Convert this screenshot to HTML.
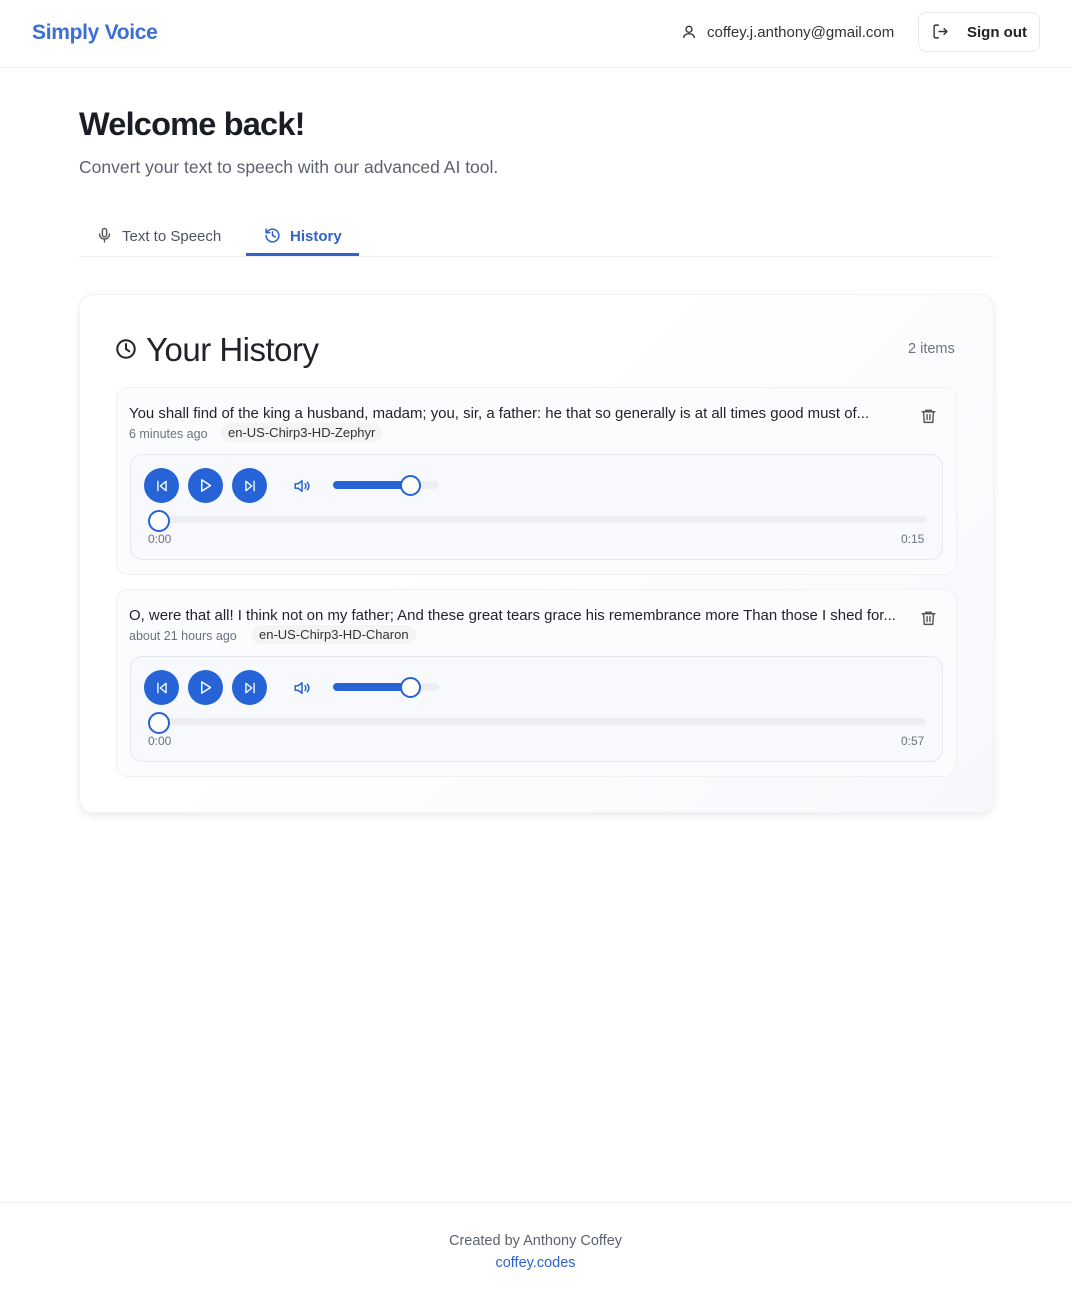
<!DOCTYPE html>
<html><head><meta charset="utf-8"><style>
*{box-sizing:border-box;margin:0;padding:0}
body{width:1071px;height:1290px;background:#fff;font-family:"Liberation Sans",sans-serif;color:#1f2937;position:relative;overflow:hidden}
.a{position:absolute;white-space:nowrap}
.btn{position:absolute;width:35px;height:35px;border-radius:50%;background:#2563d6;display:flex;align-items:center;justify-content:center}
.item{position:absolute;left:116px;width:841px;height:188px;border:1px solid #eef0f4;border-radius:12px;background:#fbfcfe}
.player{position:absolute;left:13px;top:66px;width:813px;height:106px;border:1px solid #e3e7ef;border-radius:12px;background:#f8f9fc}
.t{font-size:14.95px;color:#1f2229}
</style></head><body>
<div class="a" style="left:32px;top:21px;font-size:21px;font-weight:bold;color:#3b6fd4;letter-spacing:-0.3px">Simply Voice</div>
<svg class="a" style="left:681px;top:24px" width="16" height="16" viewBox="0 0 24 24" fill="none" stroke="#333" stroke-width="2"><circle cx="12" cy="8" r="4.5"/><path d="M4 21c0-4 3.5-6.5 8-6.5s8 2.5 8 6.5"/></svg>
<div class="a" style="left:707px;top:24px;font-size:15px;color:#333">coffey.j.anthony@gmail.com</div>
<div class="a" style="left:918px;top:12px;width:122px;height:40px;border:1px solid #e5e7eb;border-radius:8px"></div>
<svg class="a" style="left:932px;top:23px" width="17" height="17" viewBox="0 0 24 24" fill="none" stroke="#333" stroke-width="2" stroke-linecap="round" stroke-linejoin="round"><path d="M9 21H5a2 2 0 0 1-2-2V5a2 2 0 0 1 2-2h4"/><path d="M10 12h11M17 8l4 4-4 4"/></svg>
<div class="a" style="left:967px;top:24px;font-size:15px;font-weight:bold;color:#222">Sign out</div>
<div class="a" style="left:0;top:67px;width:1071px;height:1px;background:#f0f1f3"></div>

<div class="a" style="left:79px;top:106px;font-size:32.5px;font-weight:bold;color:#1a1d24;letter-spacing:-0.8px">Welcome back!</div>
<div class="a" style="left:79px;top:157px;font-size:17.5px;color:#5b6270">Convert your text to speech with our advanced AI tool.</div>

<svg class="a" style="left:96px;top:227px" width="17" height="17" viewBox="0 0 24 24" fill="none" stroke="#555" stroke-width="2" stroke-linecap="round"><rect x="9" y="2" width="6" height="12" rx="3"/><path d="M5 10a7 7 0 0 0 14 0M12 17v4"/></svg>
<div class="a" style="left:122px;top:228px;font-size:15px;color:#4b5260">Text to Speech</div>
<svg class="a" style="left:264px;top:227px" width="17" height="17" viewBox="0 0 24 24" fill="none" stroke="#3264c8" stroke-width="2.2" stroke-linecap="round" stroke-linejoin="round"><path d="M3 12a9 9 0 1 0 3-6.7L3 8"/><path d="M3 3v5h5"/><path d="M12 7v5l4 2"/></svg>
<div class="a" style="left:290px;top:228px;font-size:15px;font-weight:bold;color:#3264c8">History</div>
<div class="a" style="left:79px;top:256px;width:915px;height:1px;background:#eef0f3"></div>
<div class="a" style="left:246px;top:253px;width:113px;height:3px;background:#3264c8"></div>

<div class="a" style="left:79px;top:294px;width:915px;height:519px;border:1px solid #f0f2f5;border-radius:14px;background:linear-gradient(135deg,#fff 40%,#f6f8fc);box-shadow:0 3px 8px rgba(0,0,0,0.08)"></div>
<svg class="a" style="left:115px;top:338px" width="22" height="22" viewBox="0 0 24 24" fill="none" stroke="#1f2229" stroke-width="2.2" stroke-linecap="round"><circle cx="12" cy="12" r="9.5"/><path d="M12 6.5V12l3.5 2.5"/></svg>
<div class="a" style="left:146px;top:331px;font-size:33px;color:#1f2229;letter-spacing:-0.5px">Your History</div>
<div class="a" style="left:908px;top:341px;font-size:14.5px;color:#6b7280">2 items</div>

<div class="item" style="top:387px">
 <div class="a t" style="left:12px;top:17px">You shall find of the king a husband, madam; you, sir, a father: he that so generally is at all times good must of...</div>
 <div class="a" style="left:12px;top:39px;font-size:12.5px;color:#6b7280">6 minutes ago</div>
 <div class="a" style="left:104px;top:35px;padding:2px 7px;border-radius:10px;background:#f3f4f6;font-size:13px;color:#333">en-US-Chirp3-HD-Zephyr</div>
 <svg class="a" style="left:803px;top:19px" width="17" height="18" viewBox="0 0 24 24" fill="none" stroke="#555" stroke-width="2" stroke-linecap="round"><path d="M3 6h18M8 6V4h8v2M5 6l1 15h12l1-15M10 10v7M14 10v7"/></svg>
 <div class="player">
  <div class="btn" style="left:13px;top:13px"><svg width="14" height="14" viewBox="0 0 24 24" fill="none" stroke="#fff" stroke-width="2.3" stroke-linejoin="round" stroke-linecap="round"><path d="M5 4v16M19 4L9 12l10 8z"/></svg></div>
  <div class="btn" style="left:57px;top:13px"><svg width="15" height="15" viewBox="0 0 24 24" fill="none" stroke="#fff" stroke-width="2.3" stroke-linejoin="round"><path d="M6 3l14 9-14 9z"/></svg></div>
  <div class="btn" style="left:101px;top:13px"><svg width="14" height="14" viewBox="0 0 24 24" fill="none" stroke="#fff" stroke-width="2.3" stroke-linejoin="round" stroke-linecap="round"><path d="M19 4v16M5 4l10 8-10 8z"/></svg></div>
  <svg class="a" style="left:162px;top:22px" width="18" height="18" viewBox="0 0 24 24" fill="none" stroke="#2563d6" stroke-width="2" stroke-linejoin="round" stroke-linecap="round"><path d="M3 9h4l5-4v14l-5-4H3z"/><path d="M16 9a4 4 0 0 1 0 6M19 7a7 7 0 0 1 0 10"/></svg>
  <div class="a" style="left:202px;top:26px;width:106px;height:8px;border-radius:4px;background:#eceef2"></div>
  <div class="a" style="left:202px;top:26px;width:78px;height:8px;border-radius:4px;background:#2563d6"></div>
  <div class="a" style="left:269px;top:20px;width:21px;height:21px;border-radius:50%;background:#fff;border:2px solid #2563d6"></div>
  <div class="a" style="left:18px;top:61px;width:777px;height:7px;border-radius:4px;background:#eceef2"></div>
  <div class="a" style="left:17px;top:55px;width:22px;height:22px;border-radius:50%;background:#fff;border:2px solid #2563d6"></div>
  <div class="a" style="left:17px;top:77px;font-size:12px;color:#6b7280">0:00</div>
  <div class="a" style="left:770px;top:77px;font-size:12px;color:#6b7280">0:15</div>
 </div>
</div>

<div class="item" style="top:589px">
 <div class="a t" style="left:12px;top:17px">O, were that all! I think not on my father; And these great tears grace his remembrance more Than those I shed for...</div>
 <div class="a" style="left:12px;top:39px;font-size:12.5px;color:#6b7280">about 21 hours ago</div>
 <div class="a" style="left:135px;top:35px;padding:2px 7px;border-radius:10px;background:#f3f4f6;font-size:13px;color:#333">en-US-Chirp3-HD-Charon</div>
 <svg class="a" style="left:803px;top:19px" width="17" height="18" viewBox="0 0 24 24" fill="none" stroke="#555" stroke-width="2" stroke-linecap="round"><path d="M3 6h18M8 6V4h8v2M5 6l1 15h12l1-15M10 10v7M14 10v7"/></svg>
 <div class="player">
  <div class="btn" style="left:13px;top:13px"><svg width="14" height="14" viewBox="0 0 24 24" fill="none" stroke="#fff" stroke-width="2.3" stroke-linejoin="round" stroke-linecap="round"><path d="M5 4v16M19 4L9 12l10 8z"/></svg></div>
  <div class="btn" style="left:57px;top:13px"><svg width="15" height="15" viewBox="0 0 24 24" fill="none" stroke="#fff" stroke-width="2.3" stroke-linejoin="round"><path d="M6 3l14 9-14 9z"/></svg></div>
  <div class="btn" style="left:101px;top:13px"><svg width="14" height="14" viewBox="0 0 24 24" fill="none" stroke="#fff" stroke-width="2.3" stroke-linejoin="round" stroke-linecap="round"><path d="M19 4v16M5 4l10 8-10 8z"/></svg></div>
  <svg class="a" style="left:162px;top:22px" width="18" height="18" viewBox="0 0 24 24" fill="none" stroke="#2563d6" stroke-width="2" stroke-linejoin="round" stroke-linecap="round"><path d="M3 9h4l5-4v14l-5-4H3z"/><path d="M16 9a4 4 0 0 1 0 6M19 7a7 7 0 0 1 0 10"/></svg>
  <div class="a" style="left:202px;top:26px;width:106px;height:8px;border-radius:4px;background:#eceef2"></div>
  <div class="a" style="left:202px;top:26px;width:78px;height:8px;border-radius:4px;background:#2563d6"></div>
  <div class="a" style="left:269px;top:20px;width:21px;height:21px;border-radius:50%;background:#fff;border:2px solid #2563d6"></div>
  <div class="a" style="left:18px;top:61px;width:777px;height:7px;border-radius:4px;background:#eceef2"></div>
  <div class="a" style="left:17px;top:55px;width:22px;height:22px;border-radius:50%;background:#fff;border:2px solid #2563d6"></div>
  <div class="a" style="left:17px;top:77px;font-size:12px;color:#6b7280">0:00</div>
  <div class="a" style="left:770px;top:77px;font-size:12px;color:#6b7280">0:57</div>
 </div>
</div>

<div class="a" style="left:0;top:1202px;width:1071px;height:1px;background:#f0f1f3"></div>
<div class="a" style="left:0;top:1233px;width:1071px;text-align:center;font-size:14.5px;color:#5b6270">Created by Anthony Coffey</div>
<div class="a" style="left:0;top:1255px;width:1071px;text-align:center;font-size:14.5px;color:#2f63c8">coffey.codes</div>
</body></html>
